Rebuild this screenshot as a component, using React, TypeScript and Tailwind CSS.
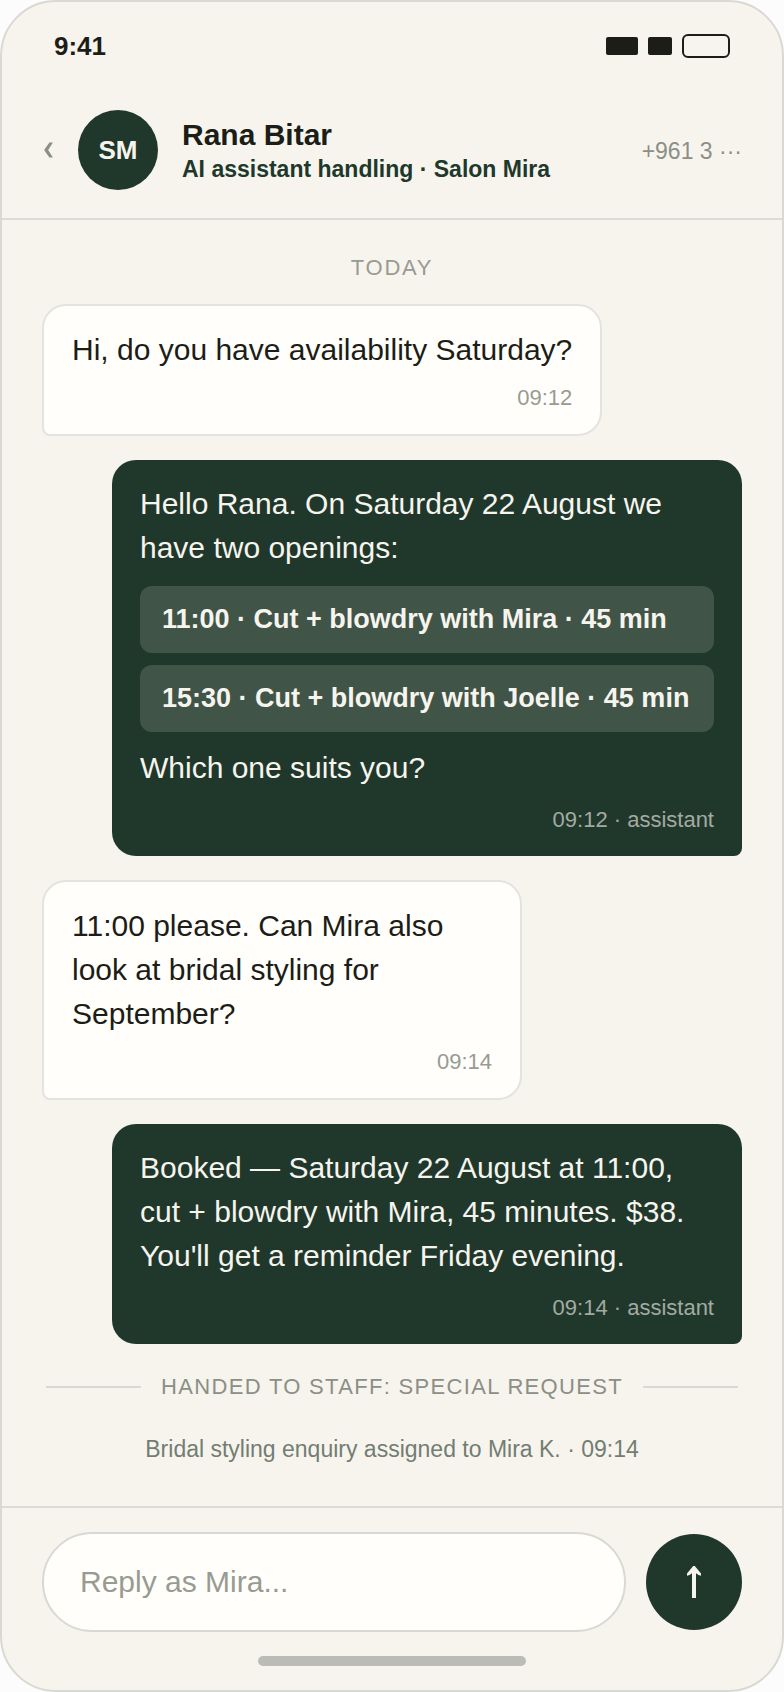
import { ReactNode } from "react";

interface Message {
  from: "guest" | "assistant";
  time: string;
  text: string;
  narrow?: boolean;
  slots?: string[];
  followUp?: string;
}

interface BubbleProps {
  time: string;
  narrow?: boolean;
  children: ReactNode;
}

const messages: Message[] = [
  {
    from: "guest",
    time: "09:12",
    text: "Hi, do you have availability Saturday?",
  },
  {
    from: "assistant",
    time: "09:12 · assistant",
    text: "Hello Rana. On Saturday 22 August we have two openings:",
    slots: [
      "11:00 · Cut + blowdry with Mira · 45 min",
      "15:30 · Cut + blowdry with Joelle · 45 min",
    ],
    followUp: "Which one suits you?",
  },
  {
    from: "guest",
    time: "09:14",
    text: "11:00 please. Can Mira also look at bridal styling for September?",
    narrow: true,
  },
  {
    from: "assistant",
    time: "09:14 · assistant",
    text: "Booked — Saturday 22 August at 11:00, cut + blowdry with Mira, 45 minutes. $38. You'll get a reminder Friday evening.",
  },
];

const StatusBar = () => (
  <div className="flex h-[88px] items-center justify-between px-[52px]">
    <span className="text-[26px] font-bold text-[#1c1d17]">9:41</span>
    <div className="flex items-center gap-2.5">
      <span className="h-[18px] w-8 rounded-xs bg-[#1c1d17]" />
      <span className="h-[18px] w-6 rounded-xs bg-[#1c1d17]" />
      <span className="h-6 w-12 rounded-md border-2 border-[#1c1d17]" />
    </div>
  </div>
);

const ChatHeader = () => (
  <header className="flex h-[130px] items-center border-b-2 border-[#dcdcd7] px-10 pb-2">
    <button
      type="button"
      aria-label="Back"
      className="mr-5 flex h-12 w-4 items-center justify-start pl-0.5"
    >
      <svg viewBox="0 0 9 16" className="h-4 w-[9px]" fill="#8b8f86">
        <path d="M5.4 0.5H8.9L4.2 8L8.9 15.5H5.4L0.4 8.6V7.4Z" />
      </svg>
    </button>
    <div className="flex size-20 shrink-0 items-center justify-center rounded-full bg-[#20382c] text-[26px] font-bold text-[#f7f4ee]">
      SM
    </div>
    <div className="ml-6 flex-1 pt-0.5">
      <h1 className="text-[30px] leading-9 font-bold text-[#1c1d17]">Rana Bitar</h1>
      <p className="text-[23px] leading-8 font-bold text-[#20382c]">
        AI assistant handling · Salon Mira
      </p>
    </div>
    <span className="pt-0.5 text-[23px] text-[#8b8f86]">+961 3 ···</span>
  </header>
);

const GuestBubble = ({ time, narrow, children }: BubbleProps) => (
  <div
    className={`self-start rounded-3xl rounded-bl-lg border-2 border-[#e3e3df] bg-[#fffefa] px-7 pt-[22px] pb-5 text-[#1c1d17] ${
      narrow ? "max-w-[480px]" : "max-w-[90%]"
    }`}
  >
    {children}
    <p className="mt-2.5 text-right text-[22px] leading-8 text-[#979b92]">{time}</p>
  </div>
);

const AssistantBubble = ({ time, children }: BubbleProps) => (
  <div className="w-[90%] self-end rounded-3xl rounded-br-lg bg-[#20382c] px-7 pt-[22px] pb-5 text-[#f7f4ee]">
    {children}
    <p className="mt-3.5 text-right text-[22px] leading-8 text-[#a3aaa2]">{time}</p>
  </div>
);

const ChatMessage = ({ message }: { message: Message }) => {
  const Bubble = message.from === "guest" ? GuestBubble : AssistantBubble;

  return (
    <Bubble time={message.time} narrow={message.narrow}>
      <p className="text-[30px] leading-[44px]">{message.text}</p>
      {message.slots && (
        <div className="mt-4 mb-3.5 flex flex-col gap-3">
          {message.slots.map((slot) => (
            <button
              key={slot}
              type="button"
              className="rounded-xl bg-[#405448] px-[22px] py-3 text-left text-[27px] leading-[43px] font-bold"
            >
              {slot}
            </button>
          ))}
        </div>
      )}
      {message.followUp && <p className="text-[30px] leading-[44px]">{message.followUp}</p>}
    </Bubble>
  );
};

const Composer = () => (
  <footer className="border-t-2 border-[#dcdcd7] px-10 pt-6 pb-6">
    <form className="flex items-center gap-5" onSubmit={(event) => event.preventDefault()}>
      <input
        type="text"
        aria-label="Reply as Mira"
        placeholder="Reply as Mira..."
        className="h-[100px] min-w-0 flex-1 rounded-full border-2 border-[#d9d9d4] bg-[#fffefa] px-9 text-[30px] text-[#1c1d17] outline-none placeholder:text-[#979b92]"
      />
      <button
        type="submit"
        aria-label="Send"
        className="flex size-24 shrink-0 items-center justify-center rounded-full bg-[#20382c]"
      >
        <svg viewBox="0 0 14 32" className="h-8 w-3.5" fill="#f7f4ee">
          <path d="M6.2 0H7.8L14 7.4V9.8Q11.5 9.3 9 7.2V32H5V7.2Q2.5 9.3 0 9.8V7.4Z" />
        </svg>
      </button>
    </form>
    <div className="mx-auto mt-6 h-2.5 w-[268px] rounded-full bg-[#bbbcb6]" />
  </footer>
);

const App = () => (
  <div className="min-h-screen bg-[#fcfcfc] font-['Liberation_Sans',Arial,sans-serif]">
    <div className="flex min-h-screen flex-col rounded-[56px] border-2 border-[#d9d9d4] bg-[#f7f4ee]">
      <StatusBar />
      <ChatHeader />
      <main className="flex flex-1 flex-col gap-6 px-10 pt-9">
        <p className="text-center text-[22px] leading-6 tracking-[0.08em] text-[#979b92]">TODAY</p>
        {messages.map((message) => (
          <ChatMessage key={message.text} message={message} />
        ))}
        <div className="flex items-center gap-5 px-1">
          <span className="h-0.5 flex-1 bg-[#d9d9d4]" />
          <span className="text-[22px] leading-[38px] tracking-[0.06em] text-[#8b8f86]">
            HANDED TO STAFF: SPECIAL REQUEST
          </span>
          <span className="h-0.5 flex-1 bg-[#d9d9d4]" />
        </div>
        <p className="text-center text-[23px] leading-[38px] text-[#727d73]">
          Bridal styling enquiry assigned to Mira K. · 09:14
        </p>
      </main>
      <Composer />
    </div>
  </div>
);

export default App;
